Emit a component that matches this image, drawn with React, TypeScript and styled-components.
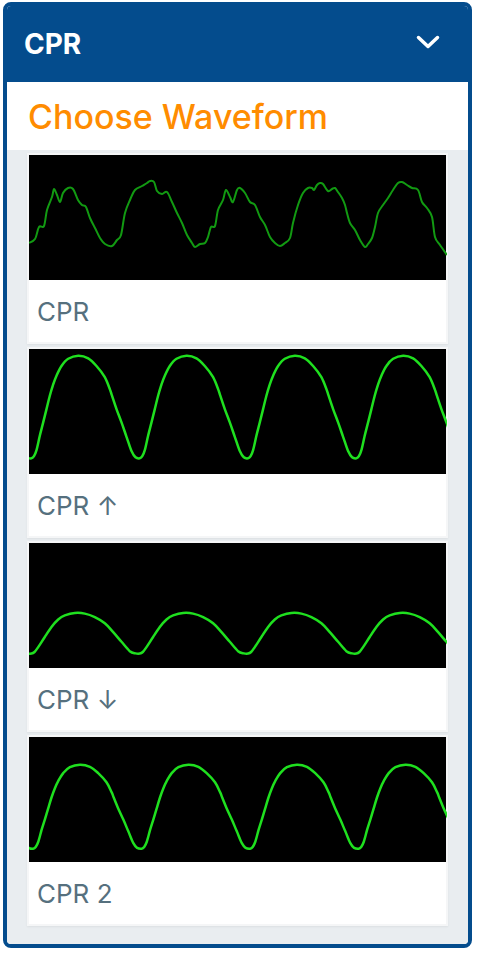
import React from "react";
import styled, { createGlobalStyle } from "styled-components";

type Pt = [number, number];

const W = 418;
const H = 125;

// catmull-rom -> cubic bezier
const smooth = (pts: Pt[]) => {
  let d = `M${pts[0][0].toFixed(1)},${pts[0][1].toFixed(1)}`;
  for (let i = 0; i < pts.length - 1; i++) {
    const p0 = pts[i - 1] || pts[i];
    const p1 = pts[i];
    const p2 = pts[i + 1];
    const p3 = pts[i + 2] || p2;
    const c1x = p1[0] + (p2[0] - p0[0]) / 6;
    const c1y = p1[1] + (p2[1] - p0[1]) / 6;
    const c2x = p2[0] - (p3[0] - p1[0]) / 6;
    const c2y = p2[1] - (p3[1] - p1[1]) / 6;
    d += ` C${c1x.toFixed(1)},${c1y.toFixed(1)} ${c2x.toFixed(1)},${c2y.toFixed(1)} ${p2[0].toFixed(1)},${p2[1].toFixed(1)}`;
  }
  return d;
};

// repeat one normalised cycle (0 = peak, 1 = trough) across the screen
const periodic = (shape: Pt[], period: number, start: number, top: number, bottom: number) => {
  const pts: Pt[] = [];
  for (let k = -1; start + k * period < W + period; k++) {
    shape.forEach(([p, n]) => pts.push([start + k * period + p, top + n * (bottom - top)]));
  }
  return smooth(pts);
};

const tallCycle: Pt[] = [
  [0, 1], [2.5, 0.98], [5, 0.92], [8.3, 0.78], [11.7, 0.65], [15, 0.52], [18.3, 0.39], [21.7, 0.28],
  [25, 0.195], [30, 0.1], [36.7, 0.03], [46.7, 0], [56.7, 0.025], [65, 0.1], [73.3, 0.21], [78.5, 0.33],
  [80.5, 0.39], [85, 0.52], [90, 0.65], [95, 0.79], [100, 0.93], [104, 0.99],
];

const lowCycle: Pt[] = [
  [0, 1], [3, 0.96], [6.7, 0.84], [13.3, 0.59], [20, 0.345], [26.7, 0.16], [33.3, 0.06], [43.3, 0],
  [53.3, 0.015], [63.3, 0.1], [73.3, 0.25], [81.7, 0.47], [90, 0.71], [98.3, 0.94], [104, 0.995],
];

const cprRaw: Pt[] = [
  [0, 88], [6, 84], [10, 72], [15, 71], [18, 55], [23, 42], [25, 34], [28, 40], [31, 47], [34, 38], [39, 33],
  [44, 34], [49, 45], [53, 50], [57, 52], [61, 63], [66, 73], [71, 83], [76, 89], [83, 91], [88, 85], [92, 80],
  [96, 58], [101, 45], [106, 35], [113, 31], [118, 28], [121, 26], [125, 27], [128, 36], [133, 39], [138, 37],
  [143, 47], [148, 58], [153, 68], [158, 80], [163, 88], [166, 92], [171, 89], [176, 88], [179, 82], [182, 72],
  [186, 71], [189, 55], [194, 45], [197, 35], [201, 42], [204, 47], [208, 35], [211, 33], [216, 38], [221, 47],
  [226, 50], [231, 62], [236, 70], [241, 82], [246, 88], [251, 91], [256, 88], [261, 83], [264, 68], [269, 50],
  [274, 38], [279, 33], [283, 33], [285, 35], [288, 30], [291, 28], [294, 29], [299, 36], [303, 34], [306, 33],
  [309, 37], [313, 43], [316, 50], [318, 58], [321, 68], [326, 75], [331, 85], [336, 92], [339, 89], [343, 83],
  [346, 72], [349, 58], [354, 50], [359, 43], [364, 35], [369, 28], [373, 27], [378, 30], [383, 33], [389, 35],
  [393, 47], [398, 53], [403, 62], [406, 82], [411, 90], [418, 100],
];

const waveforms = [
  { label: "CPR", d: smooth(cprRaw), color: "#129a12", width: 2 },
  { label: "CPR ↑", d: periodic(tallCycle, 108.3, 2.5, 6.7, 109.3), color: "#1fe01f", width: 2.5 },
  { label: "CPR ↓", d: periodic(lowCycle, 108.3, 2.5, 70, 110.6), color: "#1fe01f", width: 2.5 },
  { label: "CPR 2", d: periodic(tallCycle, 108.5, 4.2, 27.7, 111.7), color: "#1fe01f", width: 2.5 },
];

const GlobalStyle = createGlobalStyle`
  body {
    margin: 0;
    background: #ffffff;
    font-family: Inter, "Liberation Sans", sans-serif;
  }
`;

const Panel = styled.section`
  width: 469px;
  margin: 2px 0 0 3px;
  box-sizing: border-box;
  border: 4px solid #044c8d;
  border-radius: 8px;
  overflow: hidden;
`;

const Header = styled.div`
  height: 76px;
  display: flex;
  align-items: center;
  padding: 0 28px 0 17px;
  background: #044c8d;
  color: #ffffff;
  font-size: 28px;
  font-weight: 700;
`;

const Chevron = styled.svg`
  margin-left: auto;
  margin-top: -4px;
`;

const TitleBar = styled.div`
  height: 68px;
  display: flex;
  align-items: center;
  padding-left: 21px;
  background: #ffffff;
  color: #ff8c00;
  font-size: 34px;
  font-weight: 500;
`;

const List = styled.div`
  display: flex;
  flex-direction: column;
  gap: 3px;
  padding: 3px 20px 18px;
  background: #e9edf0;
`;

const Card = styled.div`
  border: 2px solid #f5f6f7;
  background: #ffffff;
  box-shadow: 0 1px 2px rgba(0, 0, 0, 0.06);
`;

const Screen = styled.div`
  height: ${H}px;
  background: #000000;
  svg {
    display: block;
  }
`;

const Label = styled.div`
  height: 62px;
  display: flex;
  align-items: center;
  padding-left: 8px;
  color: #56707e;
  font-size: 26px;
`;

export default function App() {
  return (
    <>
      <GlobalStyle />
      <Panel>
        <Header>
          CPR
          <Chevron width="24" height="14" viewBox="0 0 24 14">
            <polyline points="2.5,2.5 12,11.5 21.5,2.5" fill="none" stroke="#fff" strokeWidth="3.5" strokeLinecap="round" strokeLinejoin="round" />
          </Chevron>
        </Header>
        <TitleBar>Choose Waveform</TitleBar>
        <List>
          {waveforms.map((w) => (
            <Card key={w.label}>
              <Screen>
                <svg width={W} height={H} viewBox={`0 0 ${W} ${H}`}>
                  <path d={w.d} fill="none" stroke={w.color} strokeWidth={w.width} strokeLinejoin="round" />
                </svg>
              </Screen>
              <Label>{w.label}</Label>
            </Card>
          ))}
        </List>
      </Panel>
    </>
  );
}
